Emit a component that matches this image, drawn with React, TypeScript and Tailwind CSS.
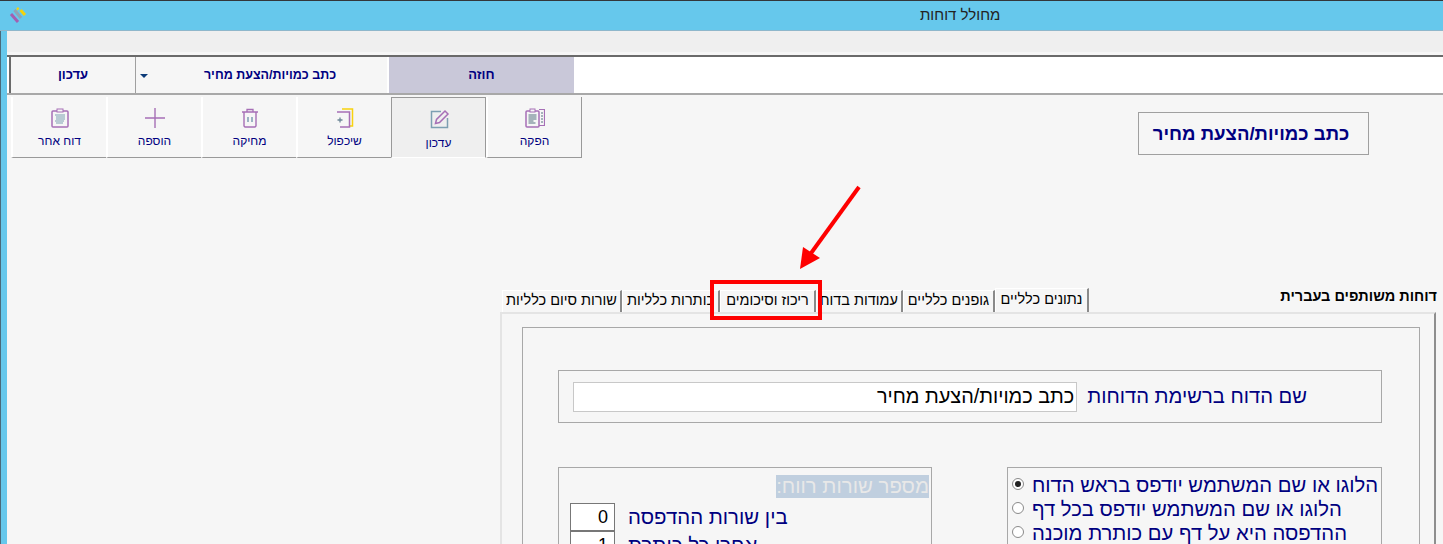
const tabs = [
  { label: "נתונים כלליים", width: "w-[94px]", active: true },
  { label: "גופנים כלליים", width: "w-[92px]" },
  { label: "עמודות בדוח", width: "w-[87px]" },
  { label: "ריכוז וסיכומים", width: "w-[96px]" },
  { label: "כותרות כלליות", width: "w-[98px]" },
  { label: "שורות סיום כלליות", width: "w-[120px]" },
]

function Logo() {
  return (
    <svg width="20" height="20" viewBox="0 0 20 20" fill="none">
      <path d="M2 11l7 8" stroke="#a35fb0" strokeWidth="3" />
      <path d="M5.500 7l6.500 8" stroke="#8fa3b5" strokeWidth="3" />
      <path d="M11.500 7l4.500 5" stroke="#f5d30a" strokeWidth="3" />
      <path d="M8 5l1.500 1.500" stroke="#f5d30a" strokeWidth="2.500" />
    </svg>
  )
}

function ReportIcon() {
  return (
    <svg width="20" height="20" viewBox="0 0 20 20" fill="none">
      <rect x="1" y="3" width="13" height="16" rx="1" stroke="#a66fb6" strokeWidth="1.500" />
      <rect x="5" y="1" width="5" height="3" fill="#f6f6f6" stroke="#a66fb6" />
      <path d="M14 1.500h5.500v16H14" stroke="#a66fb6" strokeWidth="1.200" />
      <path d="M3.500 7h8M3.500 9h8M3.500 11h8M3.500 13h5M3.500 15h7M16 5h2M16 8h2M16 11h2M16 14h2" stroke="#55707f" />
    </svg>
  )
}

function EditIcon() {
  return (
    <svg width="20" height="20" viewBox="0 0 20 20" fill="none" className="ml-[2px]">
      <path d="M11 2.500H1.500V18.500H17.500V9" stroke="#7d9fb2" strokeWidth="1.500" />
      <path d="M5.500 14.500l1-4L15 2l3 3-8.500 8.500z" stroke="#a66fb6" strokeWidth="1.500" />
    </svg>
  )
}

function CopyIcon() {
  return (
    <svg width="18" height="20" viewBox="0 0 18 20" fill="none">
      <path d="M6 1h10.500v17H14" stroke="#f8d20e" strokeWidth="1.500" />
      <path d="M1 4h12.500v15H4" stroke="#a66fb6" strokeWidth="1.500" />
      <path d="M1.500 12h5M4 9.500v5" stroke="#6d8797" strokeWidth="1.300" />
    </svg>
  )
}

function TrashIcon() {
  return (
    <svg width="18" height="20" viewBox="0 0 18 20" fill="none">
      <path d="M1 4h16M6 4V1.500h6V4" stroke="#a66fb6" strokeWidth="1.300" />
      <path d="M3 4v14l1 1h10l1-1V4" stroke="#a66fb6" strokeWidth="1.400" />
      <path d="M7 9v5M11 9v5" stroke="#7d9fb2" strokeWidth="1.500" />
    </svg>
  )
}

function PlusIcon() {
  return (
    <svg width="20" height="20" viewBox="0 0 20 20" fill="none">
      <path d="M0 10h20M10 0v20" stroke="#a66fb6" strokeWidth="1.400" />
    </svg>
  )
}

function ClipboardIcon() {
  return (
    <svg width="18" height="20" viewBox="0 0 18 20" fill="none">
      <rect x="1" y="3" width="16" height="16" rx="1" stroke="#a66fb6" strokeWidth="1.500" />
      <rect x="6" y="1" width="6" height="3" fill="#f6f6f6" stroke="#a66fb6" />
      <path d="M4 7h10M5 9h9M5 11h9M4 13h9M5 15h7" stroke="#7d9fb2" />
    </svg>
  )
}

function ToolButton({ label, active, children }: { label: string; active?: boolean; children: React.ReactNode }) {
  return (
    <div
      className={
        active
          ? "flex h-[61px] w-[95px] flex-col items-center border-x border-t border-x-[#999] border-t-[#999] border-b border-b-white bg-[#efefef] pt-[11px]"
          : "flex h-[61px] w-[95px] flex-col items-center border-b border-l-2 border-b-[#999] border-l-white pt-[11px]"
      }
    >
      <div className="flex h-[20px] items-center">{children}</div>
      <span className={active ? "mt-[6px] text-[12px] leading-[16px] text-[#000080]" : "mt-[5px] text-[12px] leading-[16px] text-[#000080]"}>{label}</span>
    </div>
  )
}

function Radio({ checked }: { checked?: boolean }) {
  return (
    <span className="mb-[2px] flex h-[12px] w-[12px] shrink-0 items-center justify-center rounded-full border border-[#8a8a8a] bg-white">
      {checked && <span className="h-[6px] w-[6px] rounded-full bg-[#222]" />}
    </span>
  )
}

function RadioRow({ label, checked }: { label: string; checked?: boolean }) {
  return (
    <div className="flex h-[24px] items-center" dir="ltr">
      <Radio checked={checked} />
      <span className="ml-[8px] whitespace-nowrap text-[20.250px] leading-[24px] text-[#000080]" dir="rtl">{label}</span>
    </div>
  )
}

function SpacingRow({ label, value }: { label: string; value: string }) {
  return (
    <div className="flex h-[28px] items-center" dir="ltr">
      <span className="flex h-[28px] w-[45px] items-center justify-end border border-[#777] bg-white pr-[6px] text-[18px] text-black">
        {value}
      </span>
      <span className="mb-[1px] ml-[13px] whitespace-nowrap text-[20.400px] leading-[24px] text-[#000080]" dir="rtl">{label}</span>
    </div>
  )
}

export default function App() {
  return (
    <div className="relative flex h-[544px] w-[1443px] flex-col overflow-hidden bg-[#f6f6f6] font-['Liberation_Sans',sans-serif]" dir="rtl">
      {/* title bar */}
      <div className="flex h-[31px] shrink-0 border-t border-b border-t-[#33373a] border-b-[#8fb7cb] bg-[#66c8ec] pl-[9px]" dir="ltr">
        <div className="flex items-center pb-[5px]">
          <Logo />
        </div>
        <span className="ml-[891px] mt-[5px] text-[15px] leading-[18px] text-[#222]" dir="rtl">מחולל דוחות</span>
      </div>

      <div className="flex min-h-0 flex-1">
        <div className="flex min-w-0 flex-1 flex-col">
          <div className="h-[21px] shrink-0 bg-[#efefef]" />

          {/* selection row */}
          <div className="mt-[3px] flex h-[40px] shrink-0 border-t-2 border-b-2 border-t-[#6a6a6a] border-b-[#a8a8a8] bg-white">
            <div className="w-[867px] shrink-0" />
            <div className="flex w-[189px] shrink-0 items-center justify-center border-x-2 border-white bg-[#c9c8d9] text-[13px] font-bold text-[#000080]">
              חוזה
            </div>
            <div className="flex w-[252px] shrink-0 items-center justify-center border-l border-l-[#a0a0a0] bg-[#f6f6f6] pl-[17px] text-[12.500px] font-bold text-[#000080]">
              <span>כתב כמויות/הצעת מחיר</span>
              <span className="absolute left-[140px] top-[74px] h-0 w-0 border-x-[4px] border-t-[4px] border-x-transparent border-t-[#0b3a78]" />
            </div>
            <div className="flex w-[126px] shrink-0 items-center justify-center border-l-2 border-l-[#6a6a6a] bg-[#f6f6f6] text-[13px] font-bold text-[#000080]">
              עדכון
            </div>
          </div>

          {/* toolbar and report title */}
          <div className="flex shrink-0 items-start justify-between pt-[2px] pl-[4px] pr-[74px]">
            <div className="mt-[15px] flex h-[43px] w-[231px] items-center justify-center border border-[#a0a0a0] pr-[5px] text-[18.600px] font-bold text-[#000080]">
              כתב כמויות/הצעת מחיר
            </div>
            <div className="flex border-r border-r-[#999]">
              <ToolButton label="הפקה"><ReportIcon /></ToolButton>
              <ToolButton label="עדכון" active><EditIcon /></ToolButton>
              <ToolButton label="שיכפול"><CopyIcon /></ToolButton>
              <ToolButton label="מחיקה"><TrashIcon /></ToolButton>
              <ToolButton label="הוספה"><PlusIcon /></ToolButton>
              <ToolButton label="דוח אחר"><ClipboardIcon /></ToolButton>
            </div>
          </div>

          {/* tabbed section */}
          <div className="ml-[493px] mr-[6px] mt-[131px] flex min-h-0 flex-1 flex-col">
            <div className="flex h-[23px] shrink-0 items-end">
              <div className="flex h-[23px] w-[348px] shrink-0 items-start text-[14.500px] font-bold leading-[15px] text-black">
                דוחות משותפים בעברית
              </div>
              {tabs.map((tab) => (
                <div
                  key={tab.label}
                  className={`flex shrink-0 items-center justify-center border-t border-l border-t-white border-l-white border-r-2 border-r-[#8a8a8a] pb-[1px] text-[14.500px] text-black ${tab.width} ${tab.active ? "h-[24px] bg-[#f6f6f6]" : "h-[22px] bg-[#f6f6f6]"}`}
                >
                  {tab.label}
                </div>
              ))}
            </div>

            <div className="mr-[1px] flex-1 border-t-2 border-r-2 border-l-2 border-t-[#e4e4e4] border-r-[#8e8e8e] border-l-[#e4e4e4] pt-[13px] pr-[14px] pl-[20px]">
              <div className="h-full border border-b-0 border-[#a8a8a8] pt-[42px] pr-[37px] pl-[35px]">
                <div className="flex h-[53px] items-center border border-[#a8a8a8] pl-[14px] pr-[74px]">
                  <span className="text-[20.200px] text-[#000080]">שם הדוח ברשימת הדוחות</span>
                  <div className="mr-[10px] flex h-[30px] flex-1 items-center border border-[#c8c8c8] bg-white px-[2px] text-[19.900px] text-black">
                    כתב כמויות/הצעת מחיר
                  </div>
                </div>

                <div className="mt-[44px] flex justify-between">
                  <div className="h-[90px] w-[375px] border border-[#a8a8a8] px-[4px] pt-[5px]">
                    <RadioRow label="הלוגו או שם המשתמש יודפס בראש הדוח" checked />
                    <RadioRow label="הלוגו או שם המשתמש יודפס בכל דף" />
                    <RadioRow label="ההדפסה היא על דף עם כותרת מוכנה" />
                  </div>
                  <div className="h-[90px] w-[374px] border border-[#a8a8a8] pl-[11px] pr-[2px] pt-[7px]">
                    <div className="mb-[5px] w-fit bg-[#c0cfdf] text-[20.400px] leading-[23px] text-[#e8e8e8]">מספר שורות רווח:</div>
                    <SpacingRow label="בין שורות ההדפסה" value="0" />
                    <SpacingRow label="אחרי כל כותרת" value="1" />
                  </div>
                </div>
              </div>
            </div>
          </div>
        </div>

        <div className="w-[7px] shrink-0 border-l border-l-[#4a6a7a] bg-[#66c8ec]" />
      </div>

      {/* annotation: red arrow and box around the tab */}
      <svg className="pointer-events-none absolute left-[790px] top-[180px]" width="80" height="95" viewBox="0 0 80 95" fill="none">
        <path d="M69 7L19 76" stroke="#fe0000" strokeWidth="4" />
        <path d="M10 89L13 67L30 78z" fill="#fe0000" />
      </svg>
      <div className="pointer-events-none absolute left-[710px] top-[280px] h-[40px] w-[112px] border-[4px] border-[#fe0000]" />
    </div>
  )
}
